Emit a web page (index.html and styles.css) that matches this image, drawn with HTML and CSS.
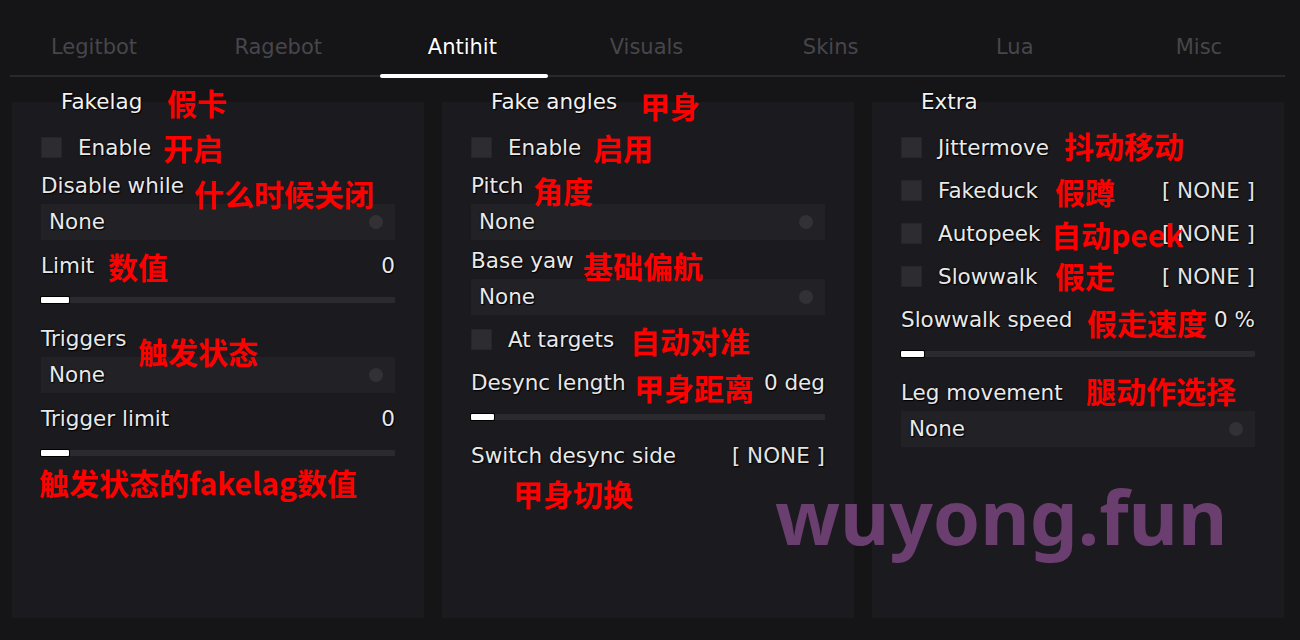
FILE: index.html
```html
<!DOCTYPE html>
<html lang="zh-CN">
<head>
<meta charset="utf-8">
<title>Antihit</title>
<link rel="stylesheet" href="styles.css">
</head>
<body>
<div class="app">
  <header class="topbar">
    <nav class="tabs">
      <div class="tab">Legitbot</div>
      <div class="tab">Ragebot</div>
      <div class="tab active">Antihit</div>
      <div class="tab">Visuals</div>
      <div class="tab">Skins</div>
      <div class="tab">Lua</div>
      <div class="tab">Misc</div>
    </nav>
  </header>

  <main class="panels">
    <section class="panel">
      <h2 class="panel-title">Fakelag</h2>
      <div class="check"><span class="box"></span><span>Enable</span></div>
      <div class="label">Disable while</div>
      <div class="select"><span>None</span><span class="dot"></span></div>
      <div class="label"><span>Limit</span><span>0</span></div>
      <div class="track"><div class="fill" style="width:28px"></div></div>
      <div class="label">Triggers</div>
      <div class="select"><span>None</span><span class="dot"></span></div>
      <div class="label"><span>Trigger limit</span><span>0</span></div>
      <div class="track"><div class="fill" style="width:28px"></div></div>
    </section>

    <section class="panel">
      <h2 class="panel-title">Fake angles</h2>
      <div class="check"><span class="box"></span><span>Enable</span></div>
      <div class="label">Pitch</div>
      <div class="select"><span>None</span><span class="dot"></span></div>
      <div class="label tight">Base yaw</div>
      <div class="select"><span>None</span><span class="dot"></span></div>
      <div class="check"><span class="box"></span><span>At targets</span></div>
      <div class="label wide"><span>Desync length</span><span>0 deg</span></div>
      <div class="track"><div class="fill" style="width:23px"></div></div>
      <div class="label"><span>Switch desync side</span><span class="bind">[ NONE ]</span></div>
    </section>

    <section class="panel">
      <h2 class="panel-title">Extra</h2>
      <div class="check"><span class="box"></span><span>Jittermove</span></div>
      <div class="check"><span class="box"></span><span>Fakeduck</span><span class="bind">[ NONE ]</span></div>
      <div class="check"><span class="box"></span><span>Autopeek</span><span class="bind">[ NONE ]</span></div>
      <div class="check"><span class="box"></span><span>Slowwalk</span><span class="bind">[ NONE ]</span></div>
      <div class="label wide"><span>Slowwalk speed</span><span>0 %</span></div>
      <div class="track"><div class="fill" style="width:23px"></div></div>
      <div class="label">Leg movement</div>
      <div class="select"><span>None</span><span class="dot"></span></div>
    </section>
  </main>

  <div class="notes">
    <span class="note n1">假卡</span>
    <span class="note n2">开启</span>
    <span class="note n3">什么时候关闭</span>
    <span class="note n4">数值</span>
    <span class="note n5">触发状态</span>
    <span class="note n6">触发状态的fakelag数值</span>
    <span class="note n7">甲身</span>
    <span class="note n8">启用</span>
    <span class="note n9">角度</span>
    <span class="note n10">基础偏航</span>
    <span class="note n11">自动对准</span>
    <span class="note n12">甲身距离</span>
    <span class="note n13">甲身切换</span>
    <span class="note n14">抖动移动</span>
    <span class="note n15">假蹲</span>
    <span class="note n16">自动peek</span>
    <span class="note n17">假走</span>
    <span class="note n18">假走速度</span>
    <span class="note n19">腿动作选择</span>
  </div>

  <div class="watermark">wuyong.fun</div>
</div>
</body>
</html>
```

FILE: styles.css
```css
* { box-sizing: border-box; }

html, body {
  margin: 0;
  padding: 0;
  background: #151417;
}

.app {
  position: relative;
  width: 1300px;
  height: 640px;
  overflow: hidden;
  background: #151417;
  font-family: "DejaVu Sans", Verdana, sans-serif;
  font-size: 21.5px;
  color: #e9e9e9;
}

/* ---------- tabs ---------- */
.topbar {
  margin: 0 15px 0 10px;
  background: linear-gradient(#29282c, #29282c) left 0 bottom 1px / 100% 2px no-repeat;
}

.tabs {
  display: flex;
  margin: 0 -6px 0 -8px;
}

.tab {
  position: relative;
  flex: 1 1 0;
  height: 78px;
  padding-top: 35px;
  line-height: 24px;
  font-size: 21px;
  text-align: center;
  color: #47464a;
}

.tab.active {
  color: #ffffff;
  text-shadow: 0 0 2px #000;
}

.tab.active::after {
  content: "";
  position: absolute;
  left: 10px;
  right: 6px;
  bottom: 0;
  height: 4px;
  border-radius: 2px;
  background: #ffffff;
}

/* ---------- panels ---------- */
.panels {
  display: flex;
  gap: 18px;
  padding: 0 16px 0 12px;
  margin-top: 24px;
}

.panel {
  flex: 1 1 0;
  height: 516px;
  padding: 0 29px;
  background: #1b1a1e;
  display: flex;
  flex-direction: column;
  text-shadow: 0 0 2px #000, 1px 1px 1px #000;
}

.panel-title {
  margin: -12px 0 0 20px;
  font-size: 21.5px;
  font-weight: normal;
  line-height: 24px;
  color: #f2f2f2;
}

.check {
  display: flex;
  align-items: center;
  height: 21px;
  margin-top: 22px;
  line-height: 24px;
}

.panel-title + .check { margin-top: 23px; }
.select + .check { margin-top: 14px; }

.box {
  width: 21px;
  height: 21px;
  margin-right: 16px;
  background: #2d2c30;
  box-shadow: inset 0 0 0 1px #262529;
}

.bind {
  margin-left: auto;
  color: #e4e4e4;
}

.label {
  display: flex;
  justify-content: space-between;
  line-height: 24px;
  margin-top: 16px;
}

.select + .label { margin-top: 14px; }
.track + .label { margin-top: 24px; }
.label.tight { margin-top: 9px; }
.label.wide { margin-top: 21px; }

.select {
  display: flex;
  align-items: center;
  height: 36px;
  margin-top: 6px;
  padding: 0 12px 0 8px;
  background: #222125;
  line-height: 24px;
}

.dot {
  margin-left: auto;
  width: 14px;
  height: 14px;
  border-radius: 50%;
  background: #323136;
}

.track {
  height: 6px;
  margin-top: 19px;
  background: #2b2a2e;
  border-radius: 1px;
}

.fill {
  height: 6px;
  background: #ffffff;
  border-radius: 1px;
  box-shadow: 0 0 0 1px #000;
}

/* ---------- red annotations (overlay) ---------- */
.notes {
  position: absolute;
  inset: 0;
  pointer-events: none;
}

.note {
  position: absolute;
  font-family: "Noto Sans CJK SC", "Noto Sans", sans-serif;
  font-weight: 700;
  font-size: 30px;
  line-height: 30px;
  color: #ff0000;
  white-space: nowrap;
}

.n1  { left: 167px;  top: 87px; }
.n2  { left: 163px;  top: 132px; }
.n3  { left: 194px;  top: 178px; }
.n4  { left: 108px;  top: 251px; }
.n5  { left: 138px;  top: 336px; }
.n6  { left: 39px;   top: 467px; }
.n7  { left: 640px;  top: 90px; }
.n8  { left: 593px;  top: 132px; }
.n9  { left: 533px;  top: 175px; }
.n10 { left: 583px;  top: 250px; }
.n11 { left: 630px;  top: 325px; }
.n12 { left: 634px;  top: 372px; }
.n13 { left: 513px;  top: 478px; }
.n14 { left: 1064px; top: 130px; }
.n15 { left: 1055px; top: 176px; }
.n16 { left: 1051px; top: 219px; }
.n17 { left: 1055px; top: 260px; }
.n18 { left: 1087px; top: 307px; }
.n19 { left: 1086px; top: 375px; }

/* ---------- watermark (overlay) ---------- */
.watermark {
  position: absolute;
  left: 775px;
  top: 478px;
  font-family: "Noto Sans", "Open Sans", sans-serif;
  font-weight: 700;
  font-size: 76px;
  line-height: 76px;
  color: #6a3e6e;
  white-space: nowrap;
  pointer-events: none;
}
```
